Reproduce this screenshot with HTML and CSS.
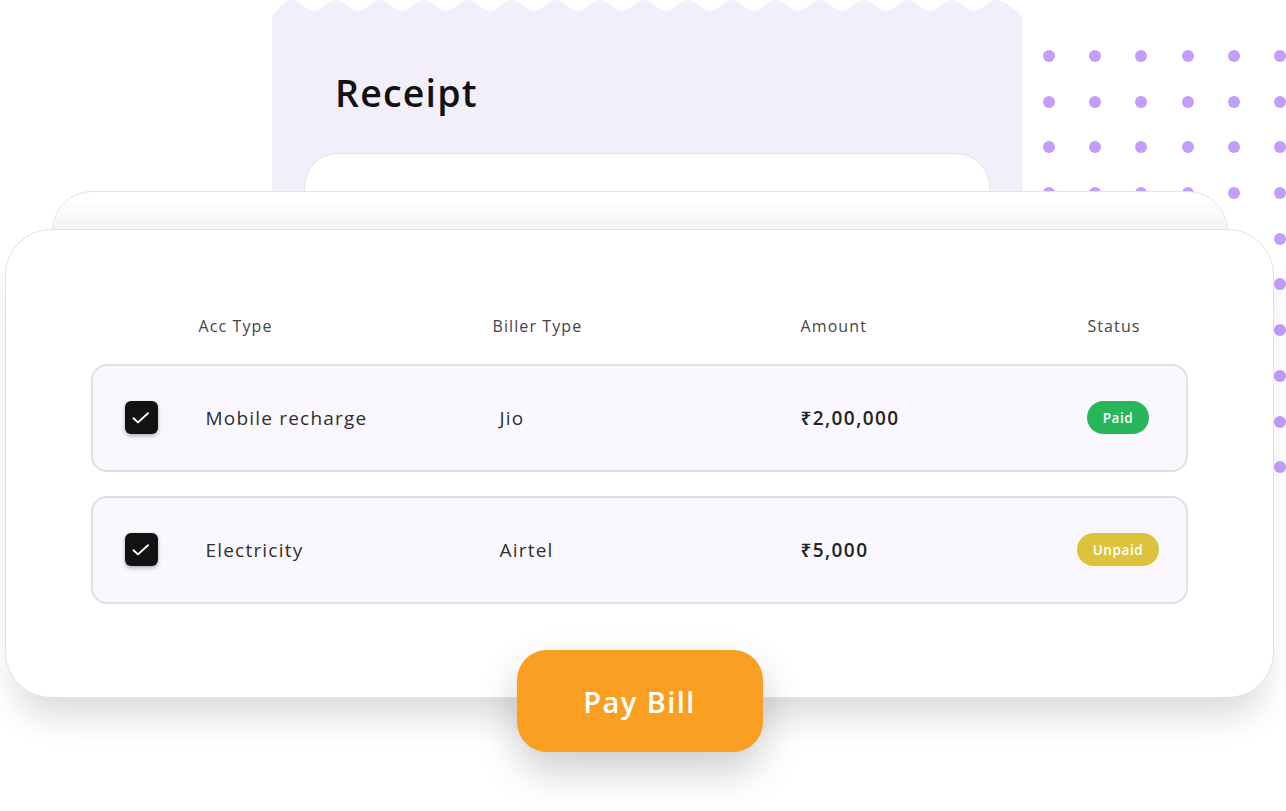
FILE: index.html
```html
<!DOCTYPE html>
<html lang="en">
<head>
<meta charset="utf-8">
<title>Pay Bill</title>
<link rel="stylesheet" href="styles.css">
</head>
<body>
<div class="scene">
  <div class="receipt">
    <svg class="receipt-wave" width="750" height="20" viewBox="0 0 750 20" aria-hidden="true">
      <path fill="#f2effb" d="M0,20 L0,17 C6,8 12,0 20,0 C28,0 34,11 42,11 S56,0 64,0 S78,11 86,11 S100,0 108,0 S122,11 130,11 S144,0 152,0 S166,11 174,11 S188,0 196,0 S210,11 218,11 S232,0 240,0 S254,11 262,11 S276,0 284,0 S298,11 306,11 S320,0 328,0 S342,11 350,11 S364,0 372,0 S386,11 394,11 S408,0 416,0 S430,11 438,11 S452,0 460,0 S474,11 482,11 S496,0 504,0 S518,11 526,11 S540,0 548,0 S562,11 570,11 S584,0 592,0 S606,11 614,11 S628,0 636,0 S650,11 658,11 S672,0 680,0 S694,11 702,11 S716,0 724,0 C732,0 744,10 750,17 L750,20 Z"/>
    </svg>
    <div class="receipt-body">
      <h1 class="receipt-title">Receipt</h1>
      <div class="receipt-sheet"></div>
    </div>
  </div>

  <div class="dots" aria-hidden="true">
    <span></span><span></span><span></span><span></span><span></span><span></span>
    <span></span><span></span><span></span><span></span><span></span><span></span>
    <span></span><span></span><span></span><span></span><span></span><span></span>
    <span></span><span></span><span></span><span></span><span></span><span></span>
    <span></span><span></span><span></span><span></span><span></span><span></span>
    <span></span><span></span><span></span><span></span><span></span><span></span>
    <span></span><span></span><span></span><span></span><span></span><span></span>
    <span></span><span></span><span></span><span></span><span></span><span></span>
    <span></span><span></span><span></span><span></span><span></span><span></span>
    <span></span><span></span><span></span><span></span><span></span><span></span>
  </div>

  <div class="cards">
    <div class="back-card"></div>
    <div class="main-wrap">
      <div class="main-card">
        <div class="table-head">
          <span class="th">Acc Type</span>
          <span class="th">Biller Type</span>
          <span class="th">Amount</span>
          <span class="th th-status">Status</span>
        </div>
        <div class="bill-row">
          <span class="check">
            <svg width="20" height="20" viewBox="0 0 20 20" aria-hidden="true"><path d="M2.5 10.2 L7 14.4 L17 5.2" fill="none" stroke="#fff" stroke-width="1.9" stroke-linecap="round" stroke-linejoin="round"/></svg>
          </span>
          <span class="cell">Mobile recharge</span>
          <span class="cell">Jio</span>
          <span class="cell amount">₹2,00,000</span>
          <span class="status"><span class="badge badge-paid">Paid</span></span>
        </div>
        <div class="bill-row">
          <span class="check">
            <svg width="20" height="20" viewBox="0 0 20 20" aria-hidden="true"><path d="M2.5 10.2 L7 14.4 L17 5.2" fill="none" stroke="#fff" stroke-width="1.9" stroke-linecap="round" stroke-linejoin="round"/></svg>
          </span>
          <span class="cell">Electricity</span>
          <span class="cell">Airtel</span>
          <span class="cell amount">₹5,000</span>
          <span class="status"><span class="badge badge-unpaid">Unpaid</span></span>
        </div>
      </div>
      <button class="pay-btn">Pay Bill</button>
    </div>
  </div>
</div>
</body>
</html>
```

FILE: styles.css
```css
* { box-sizing: border-box; }

html, body {
  margin: 0;
  padding: 0;
  background: #ffffff;
}

body {
  width: 1286px;
  height: 811px;
  overflow: hidden;
  font-family: "Open Sans", "Noto Sans", sans-serif;
  color: #2b2b2b;
}

.scene {
  display: grid;
  grid-template-columns: 1286px;
  grid-template-rows: 811px;
}

.scene > * {
  grid-area: 1 / 1;
}

/* Receipt (back layer) */
.receipt {
  margin-left: 272px;
  width: 750px;
  align-self: start;
}

.receipt-wave {
  display: block;
}

.receipt-body {
  background: #f2effb;
  height: 260px;
  padding-top: 50px;
}

.receipt-title {
  margin: 0 0 0 63px;
  font-size: 37.5px;
  line-height: 46px;
  font-weight: 600;
  color: #121212;
  letter-spacing: 1.2px;
}

.receipt-sheet {
  margin: 37px 0 0 32px;
  width: 686px;
  height: 120px;
  background: #ffffff;
  border: 1.5px solid #e4e2ec;
  border-radius: 34px;
}

/* Dot grid */
.dots {
  margin: 50px 0 0 1043px;
  align-self: start;
  justify-self: start;
  display: grid;
  grid-template-columns: repeat(6, 12px);
  grid-auto-rows: 12px;
  column-gap: 34.2px;
  row-gap: 33.7px;
}

.dots span {
  width: 12px;
  height: 12px;
  border-radius: 50%;
  background: #c29dfc;
}

/* Cards */
.cards {
  display: flex;
  flex-direction: column;
  align-items: flex-start;
  padding-top: 191px;
}

.back-card {
  margin-left: 52px;
  width: 1176px;
  height: 90px;
  border: 1.5px solid #e3e3e3;
  border-radius: 40px;
  background: linear-gradient(to bottom, #ffffff 0px, #ffffff 8px, #f4f4f4 38px, #f4f4f4 100%);
}

.main-wrap {
  margin: -52px 0 0 5px;
  width: 1269px;
  display: flex;
  flex-direction: column;
  align-items: center;
}

.main-card {
  width: 1269px;
  height: 469px;
  background: #ffffff;
  border: 1.5px solid #e3e3e3;
  border-radius: 46px;
  padding: 85.5px 85px 0 84.5px;
  box-shadow: 0 28px 34px -10px rgba(0, 0, 0, 0.14);
  display: flex;
  flex-direction: column;
}

.table-head {
  display: grid;
  grid-template-columns: 294px 308px 251px 125px;
  padding: 0 10px 0 108px;
  height: 20px;
  align-items: center;
  margin-bottom: 28px;
}

.th {
  font-size: 16px;
  line-height: 20px;
  font-weight: 500;
  color: #454545;
  letter-spacing: 1.1px;
}

.th-status {
  text-align: center;
}

.bill-row {
  height: 108px;
  border: 2px solid #e0dfe4;
  border-radius: 16px;
  background: #faf8fe;
  display: grid;
  grid-template-columns: 81px 294px 301px 1fr 120px;
  align-items: center;
  padding: 0 8px 0 32px;
  margin-bottom: 24px;
}

.check {
  width: 33px;
  height: 33px;
  border-radius: 6px;
  background: #121212;
  box-shadow: 0 2px 4px rgba(0, 0, 0, 0.3);
  display: flex;
  align-items: center;
  justify-content: center;
}

.check svg {
  display: block;
}

.cell {
  font-size: 19px;
  line-height: 24px;
  color: #2f2f2f;
  letter-spacing: 1.2px;
}

.amount {
  font-weight: 600;
  color: #232323;
  letter-spacing: 1.4px;
}

.status {
  display: flex;
  justify-content: center;
}

.badge {
  height: 33px;
  border-radius: 17px;
  display: flex;
  align-items: center;
  justify-content: center;
  color: #ffffff;
  font-size: 13.5px;
  font-weight: 600;
  letter-spacing: 0.6px;
}

.badge-paid {
  width: 62px;
  background: #27b65a;
}

.badge-unpaid {
  width: 82px;
  background: #ddc33c;
}

.pay-btn {
  margin-top: -48px;
  width: 246px;
  height: 102px;
  border: none;
  border-radius: 30px;
  background: #fb9f22;
  color: #ffffff;
  font-family: "Open Sans", "Noto Sans", sans-serif;
  font-size: 29px;
  font-weight: 600;
  letter-spacing: 1.4px;
  box-shadow: 0 18px 40px rgba(0, 0, 0, 0.2);
  cursor: pointer;
}
```
